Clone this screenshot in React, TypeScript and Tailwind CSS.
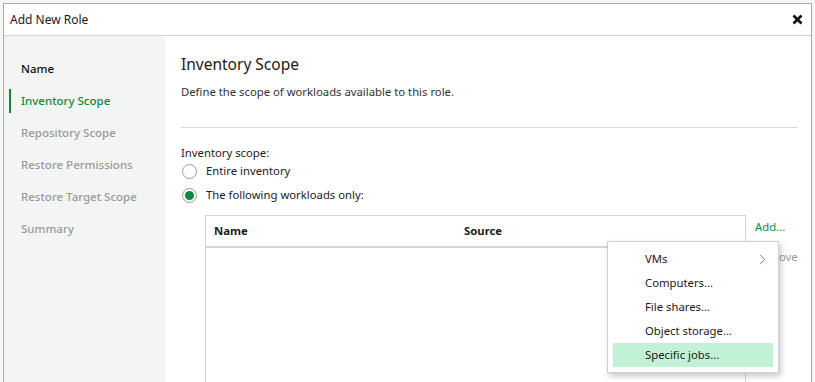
import { ChevronRight } from "lucide-react";

const steps = [
  { label: "Name", state: "done" },
  { label: "Inventory Scope", state: "active" },
  { label: "Repository Scope", state: "todo" },
  { label: "Restore Permissions", state: "todo" },
  { label: "Restore Target Scope", state: "todo" },
  { label: "Summary", state: "todo" },
];

const menuItems = ["VMs", "Computers...", "File shares...", "Object storage...", "Specific jobs..."];

function Radio({ checked }: { checked?: boolean }) {
  return (
    <span className="w-[15px] h-[15px] rounded-full border border-[#9a9a9a] bg-white flex items-center justify-center shrink-0">
      {checked && <span className="w-[9px] h-[9px] rounded-full bg-[#0f8a3c]" />}
    </span>
  );
}

export default function App() {
  return (
    <div
      className="w-[815px] h-[382px] overflow-hidden bg-[#f6f6f6] pt-[3px] pl-[3px] pr-[3px] text-[11.3px] text-[#222]"
      style={{ fontFamily: '"Noto Sans", "Open Sans", sans-serif' }}
    >
      <div className="h-[400px] border border-[#a8a8a8] bg-white flex flex-col">
        {/* Title bar */}
        <div className="h-[32px] shrink-0 flex items-center justify-between pl-[6px] pr-[8px] border-b border-[#d4d4d4]">
          <span className="text-[12px] text-[#1a1a1a]">Add New Role</span>
          <svg width="11" height="11" viewBox="0 0 11 11">
            <path d="M1.5 1.5 L9.5 9.5 M9.5 1.5 L1.5 9.5" stroke="#111" strokeWidth="2.6" />
          </svg>
        </div>

        <div className="flex flex-1">
          {/* Sidebar */}
          <div className="w-[161px] shrink-0 bg-[#f3f4f4] pt-[17px] flex flex-col">
            {steps.map((s) => (
              <div key={s.label} className="h-[32px] flex items-center relative pl-[17px]">
                {s.state === "active" && (
                  <span className="absolute left-[5px] top-[4px] w-[2px] h-[24px] bg-[#0f8a3c]" />
                )}
                <span
                  className={
                    "text-[11.5px] font-medium " +
                    (s.state === "done"
                      ? "text-[#111]"
                      : s.state === "active"
                      ? "text-[#0f8a3c]"
                      : "text-[#9a9a9a]")
                  }
                >
                  {s.label}
                </span>
              </div>
            ))}
          </div>

          {/* Content */}
          <div className="flex-1 pl-[16px] pr-[14px] pt-[17px] relative">
            <div className="text-[15.5px] text-[#1a1a1a] leading-[22px]">Inventory Scope</div>
            <div className="mt-[8px] text-[#333] leading-[18px]">Define the scope of workloads available to this role.</div>
            <div className="mt-[26px] border-t border-[#d8d8d8]" />

            <div className="mt-[16px] leading-[18px] text-[#222]">Inventory scope:</div>
            <div className="mt-[-1px] flex items-center gap-[9px] h-[20px] pl-[1px]">
              <Radio />
              <span>Entire inventory</span>
            </div>
            <div className="mt-[4px] flex items-center gap-[9px] h-[20px] pl-[1px]">
              <Radio checked />
              <span>The following workloads only:</span>
            </div>

            <div className="mt-[10px] ml-[24px] flex gap-[9px]">
              <div className="w-[541px] h-[200px] border border-[#d4d4d4] bg-white">
                <div className="h-[32px] flex items-center border-b-2 border-[#d4d4d4] font-bold text-[#1a1a1a]">
                  <span className="pl-[8px] w-[258px]">Name</span>
                  <span>Source</span>
                </div>
              </div>
              <div className="flex flex-col pt-[3px] leading-[18px]">
                <span className="text-[#0f8a3c]">Add...</span>
                <span className="mt-[12px] text-[#9a9a9a]">Remove</span>
              </div>
            </div>

            {/* Dropdown menu */}
            <div className="absolute left-[442px] top-[205px] w-[172px] bg-white border border-[#d0d0d0] shadow-[2px_3px_6px_rgba(0,0,0,0.22)] py-[5px] px-[5px]">
              {menuItems.map((item, i) => (
                <div
                  key={item}
                  className={
                    "h-[24px] flex items-center justify-between pl-[32px] pr-[2px] text-[#1a1a1a] " +
                    (i === 4 ? "bg-[#c2f2d6]" : "")
                  }
                >
                  <span>{item}</span>
                  {i === 0 && <ChevronRight size={17} strokeWidth={1.1} className="text-[#555]" />}
                </div>
              ))}
            </div>
          </div>
        </div>
      </div>
    </div>
  );
}
